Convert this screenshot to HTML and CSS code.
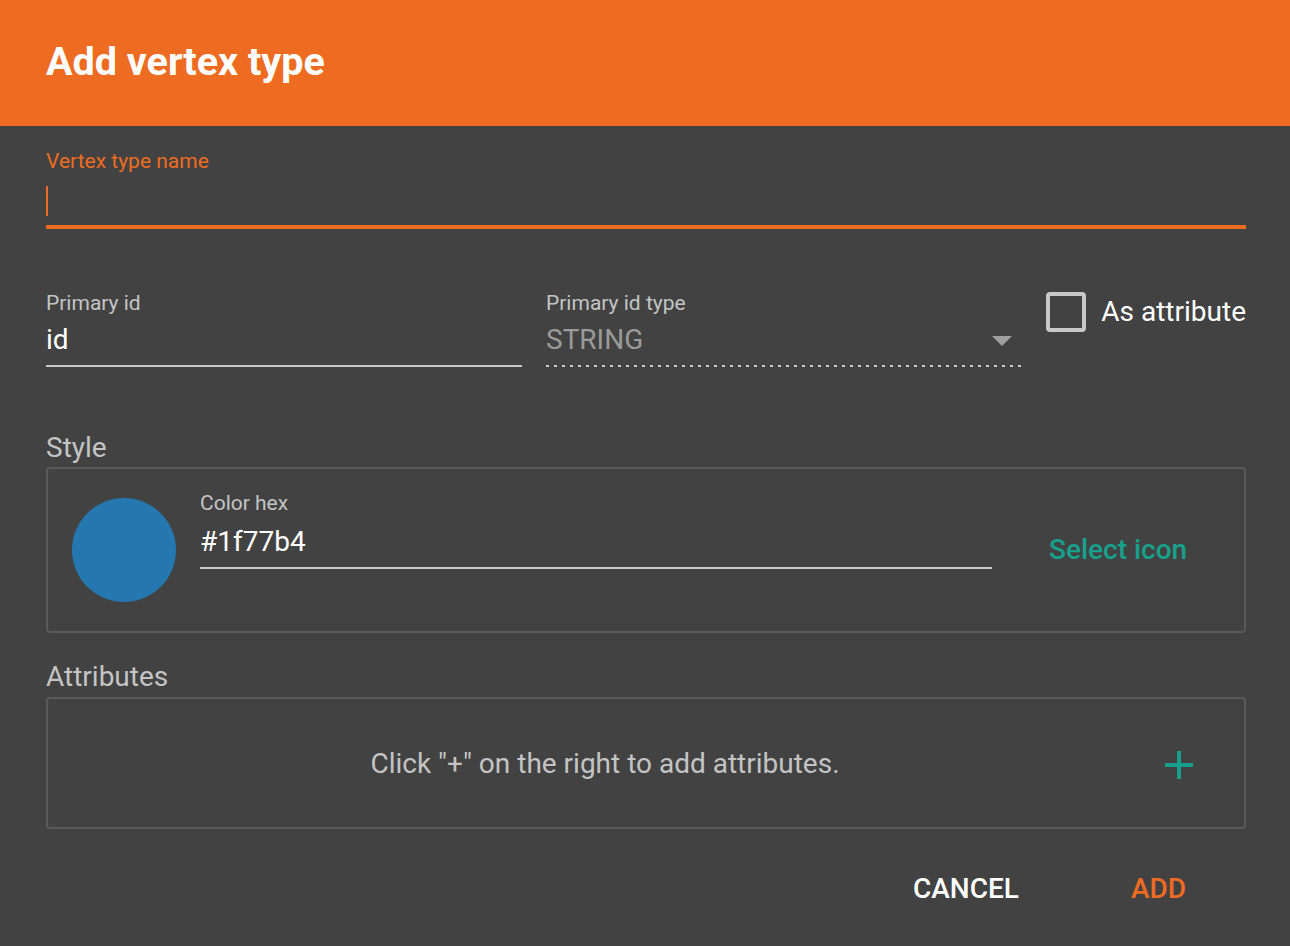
FILE: index.html
```html
<!DOCTYPE html>
<html>
<head>
<meta charset="utf-8">
<link rel="stylesheet" href="styles.css">
</head>
<body>
<div class="dialog">
  <header class="dialog-title"><h1>Add vertex type</h1></header>
  <div class="dialog-body">
    <div class="field name-field">
      <label class="field-label orange">Vertex type name</label>
      <div class="name-input"><span class="caret"></span></div>
    </div>

    <div class="id-row">
      <div class="field id-field">
        <label class="field-label">Primary id</label>
        <div class="field-value">id</div>
      </div>
      <div class="field type-field">
        <label class="field-label">Primary id type</label>
        <div class="field-value select-value">
          <span>STRING</span>
          <svg class="arrow" width="20" height="10" viewBox="0 0 20 10"><path d="M0 0h20L10 10z" fill="#9e9e9e"/></svg>
        </div>
      </div>
      <div class="checkbox-field">
        <span class="checkbox"></span>
        <span class="checkbox-label">As attribute</span>
      </div>
    </div>

    <h2 class="section-title">Style</h2>
    <div class="panel style-panel">
      <div class="swatch"></div>
      <div class="field hex-field">
        <label class="field-label">Color hex</label>
        <div class="field-value">#1f77b4</div>
      </div>
      <button class="text-btn teal">Select icon</button>
    </div>

    <h2 class="section-title attr-title">Attributes</h2>
    <div class="panel attr-panel">
      <div class="attr-empty">Click "+" on the right to add attributes.</div>
      <button class="plus-btn" aria-label="add attribute">
        <svg width="30" height="30" viewBox="0 0 30 30"><path d="M15 1v28M1 15h28" stroke="#17a08c" stroke-width="4"/></svg>
      </button>
    </div>

    <div class="actions">
      <button class="action-btn cancel">CANCEL</button>
      <button class="action-btn add">ADD</button>
    </div>
  </div>
</div>
</body>
</html>
```

FILE: styles.css
```css
* { box-sizing: border-box; }
html, body {
  margin: 0;
  padding: 0;
  background: #424242;
  font-family: Roboto, "Liberation Sans", sans-serif;
  color: #fff;
}
.dialog {
  width: 1290px;
  height: 946px;
  background: #424242;
}
.dialog-title {
  height: 126px;
  background: #ee6c21;
  display: flex;
  align-items: center;
  padding-left: 46px;
}
.dialog-title h1 {
  margin: 0;
  font-size: 39.5px;
  font-weight: 700;
  color: #fff;
  line-height: 1;
  padding-bottom: 2px;
}
.dialog-body {
  padding: 0 44px 0 46px;
}
.field-label {
  display: block;
  font-size: 21px;
  line-height: 24px;
  color: #c4c4c4;
}
.field-label.orange { color: #ee6c21; }
.name-field { padding-top: 23px; }
.name-input {
  height: 56px;
  border-bottom: 4px solid #ee6c21;
  padding-top: 13px;
}
.caret {
  display: block;
  width: 2px;
  height: 30px;
  background: #ee6c21;
}
.id-row {
  display: flex;
  align-items: flex-start;
  margin-top: 62px;
}
.id-field { width: 476px; }
.type-field { width: 475px; margin-left: 24px; }
.field-value {
  font-size: 28px;
  line-height: 34px;
  color: #fff;
  border-bottom: 2px solid #c8c8c8;
}
.id-field .field-value, .type-field .field-value { height: 52px; padding-top: 8px; }
.select-value {
  display: flex;
  justify-content: space-between;
  align-items: flex-start;
  color: #9a9a9a;
  border-bottom: none !important;
  background-image: repeating-linear-gradient(to right, #c8c8c8 0 3px, transparent 3px 8px);
  background-size: 100% 2px;
  background-position: left bottom;
  background-repeat: no-repeat;
}
.select-value .arrow { margin-top: 13px; margin-right: 9px; }
.checkbox-field {
  margin-left: 25px;
  display: flex;
  align-items: center;
  margin-top: 1px;
  flex: 1;
  justify-content: space-between;
}
.checkbox {
  width: 40px;
  height: 40px;
  border: 4px solid #c8c8c8;
  border-radius: 4px;
}
.checkbox-label {
  font-size: 28px;
  line-height: 34px;
  color: #fff;
}
.section-title {
  margin: 64px 0 0;
  font-size: 28px;
  font-weight: 400;
  line-height: 34px;
  color: #c4c4c4;
}
.panel {
  border: 2px solid #5a5a5a;
  border-radius: 4px;
}
.style-panel {
  margin-top: 2px;
  height: 166px;
  display: flex;
  align-items: center;
  padding-left: 24px;
}
.swatch {
  width: 104px;
  height: 104px;
  border-radius: 50%;
  background: #2577b0;
  flex: none;
}
.hex-field {
  width: 792px;
  margin-left: 24px;
  align-self: flex-start;
  margin-top: 22px;
}
.hex-field .field-value { height: 54px; padding-top: 10px; }
.text-btn {
  background: none;
  border: none;
  font-family: inherit;
  font-size: 28px;
  font-weight: 500;
  padding: 0;
  margin-left: 57px;
  margin-top: -2px;
}
.teal { color: #17a08c; }
.attr-title { margin-top: 27px; }
.attr-panel {
  margin-top: 3px;
  height: 132px;
  display: flex;
  align-items: center;
}
.attr-empty {
  flex: 1;
  text-align: center;
  font-size: 28px;
  color: #c4c4c4;
  padding-right: 2px;
}
.plus-btn {
  background: none;
  border: none;
  padding: 0;
  width: 30px;
  height: 30px;
  margin-right: 50px;
  margin-top: 4px;
  display: flex;
}
.actions {
  display: flex;
  justify-content: flex-end;
  margin-top: 43px;
  padding-right: 60px;
}
.action-btn {
  background: none;
  border: none;
  padding: 0;
  font-family: inherit;
  font-size: 28px;
  font-weight: 500;
  line-height: 34px;
}
.cancel { color: #fff; }
.add { color: #ee6c21; margin-left: 112px; }
```
